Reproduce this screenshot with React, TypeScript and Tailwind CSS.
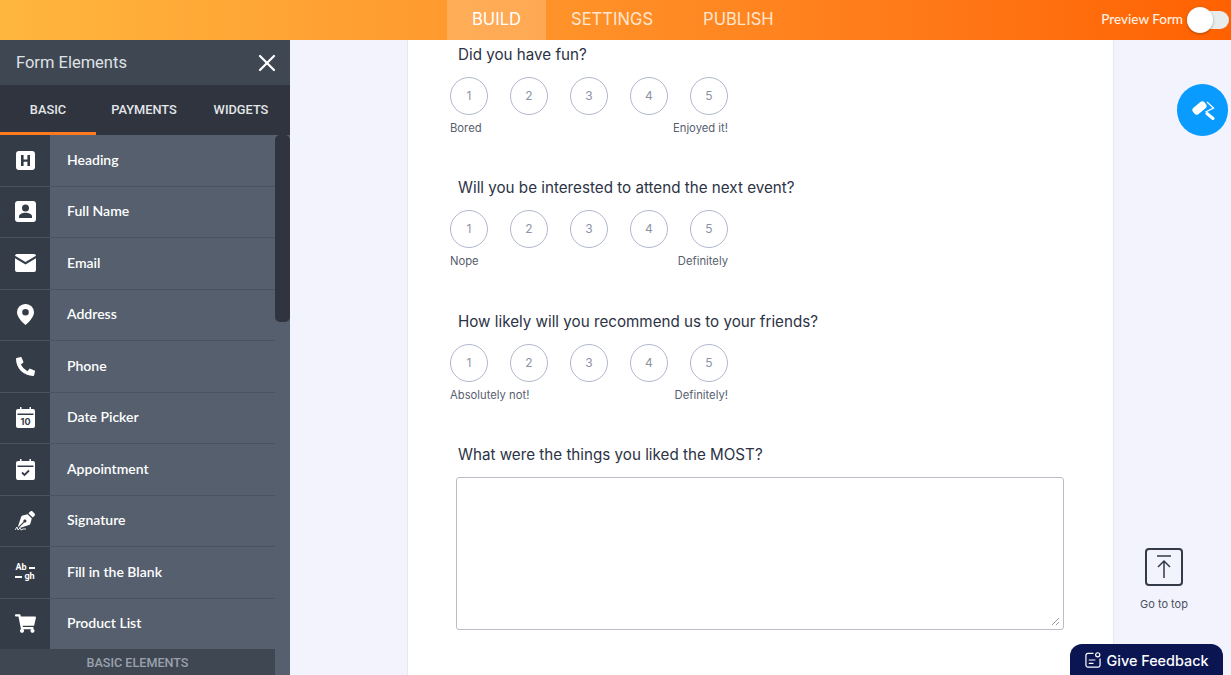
import { FaPenNib, FaShoppingCart, FaPhoneAlt } from "react-icons/fa";
import { X } from "lucide-react";
import type { ReactNode } from "react";

function HeadingIcon() {
  return (
    <svg width="19" height="19" viewBox="0 0 19 19">
      <path
        fill="#fff"
        fillRule="evenodd"
        d="M3 0h13a3 3 0 0 1 3 3v13a3 3 0 0 1-3 3H3a3 3 0 0 1-3-3V3a3 3 0 0 1 3-3zM5 4v11h2.6v-4.2h3.8V15H14V4h-2.6v4.4H7.600V4z"
      />
    </svg>
  );
}

function NameIcon() {
  return (
    <svg width="21" height="21" viewBox="0 0 21 21">
      <path
        fill="#fff"
        fillRule="evenodd"
        d="M3 0h15a3 3 0 0 1 3 3v15a3 3 0 0 1-3 3H3a3 3 0 0 1-3-3V3a3 3 0 0 1 3-3zM10.500 3.500a3.500 3.500 0 1 0 0 7 3.500 3.500 0 0 0 0-7zM4 17h13v-1.500c0-2.400-3.500-3.700-6.500-3.700S4 13.100 4 15.500z"
      />
    </svg>
  );
}

function MailIcon() {
  return (
    <svg width="21" height="18" viewBox="0 0 21 18">
      <path fill="#fff" d="M2 0h17a2 2 0 0 1 2 1.700L10.500 8 0 1.700A2 2 0 0 1 2 0z" />
      <path fill="#fff" d="M0 4.300l10.500 6.300L21 4.300V16a2 2 0 0 1-2 2H2a2 2 0 0 1-2-2z" />
    </svg>
  );
}

function PinIcon() {
  return (
    <svg width="17" height="21" viewBox="0 0 17 21">
      <path
        fill="#fff"
        fillRule="evenodd"
        d="M8.500 0A8.300 8.300 0 0 0 0 8.300c0 4.600 5 10 8.500 12.700 3.500-2.700 8.500-8.100 8.500-12.700A8.300 8.300 0 0 0 8.500 0zm0 5a3.300 3.300 0 1 1 0 6.600 3.300 3.300 0 0 1 0-6.600z"
      />
    </svg>
  );
}

function CalendarTenIcon() {
  return (
    <svg width="19" height="21" viewBox="0 0 19 21">
      <path
        fill="#fff"
        fillRule="evenodd"
        d="M4 0h1.500v2h8V0H15v2h2a2 2 0 0 1 2 2v15a2 2 0 0 1-2 2H2a2 2 0 0 1-2-2V4a2 2 0 0 1 2-2h2zM1.500 6.500V8h16V6.500z"
      />
      <text x="9.500" y="18" textAnchor="middle" fontSize="9" fontWeight="700" fill="#343c48" fontFamily="Inter, sans-serif">
        10
      </text>
    </svg>
  );
}

function CalendarCheckIcon() {
  return (
    <svg width="19" height="21" viewBox="0 0 19 21">
      <path
        fill="#fff"
        fillRule="evenodd"
        d="M4 0h1.500v2h8V0H15v2h2a2 2 0 0 1 2 2v15a2 2 0 0 1-2 2H2a2 2 0 0 1-2-2V4a2 2 0 0 1 2-2h2zM1.500 6.500V8h16V6.500z"
      />
      <path d="M6 13.500l2.500 2.500 4.500-4.500" fill="none" stroke="#343c48" strokeWidth="1.800" />
    </svg>
  );
}

function SignatureIcon() {
  return (
    <div className="relative h-[20px] w-[20px]">
      <FaPenNib className="absolute right-0 top-0 text-[17px] text-white" />
      <svg className="absolute bottom-0 left-0" width="11" height="5" viewBox="0 0 11 5">
        <path d="M0 4l2-3 1 3 2-2 1 2 2-1 3 0" fill="none" stroke="#fff" strokeWidth="0.900" />
      </svg>
    </div>
  );
}

function BlankIcon() {
  return (
    <div className="flex flex-col text-[9px] font-bold leading-[9px] text-white [font-family:Roboto,sans-serif]">
      <div className="flex items-center gap-[2px]">
        Ab<span className="h-[2px] w-[6px] bg-white" />
      </div>
      <div className="flex items-center gap-[2px]">
        <span className="h-[2px] w-[7px] bg-white" />gh
      </div>
    </div>
  );
}

const elements: { label: string; icon: ReactNode }[] = [
  { label: "Heading", icon: <HeadingIcon /> },
  { label: "Full Name", icon: <NameIcon /> },
  { label: "Email", icon: <MailIcon /> },
  { label: "Address", icon: <PinIcon /> },
  { label: "Phone", icon: <FaPhoneAlt className="text-[19px] text-white" /> },
  { label: "Date Picker", icon: <CalendarTenIcon /> },
  { label: "Appointment", icon: <CalendarCheckIcon /> },
  { label: "Signature", icon: <SignatureIcon /> },
  { label: "Fill in the Blank", icon: <BlankIcon /> },
  { label: "Product List", icon: <FaShoppingCart className="text-[21px] text-white" /> },
];

const questions = [
  { q: "Did you have fun?", low: "Bored", high: "Enjoyed it!" },
  { q: "Will you be interested to attend the next event?", low: "Nope", high: "Definitely" },
  { q: "How likely will you recommend us to your friends?", low: "Absolutely not!", high: "Definitely!" },
];

function Sidebar() {
  return (
    <aside className="flex h-full w-[290px] shrink-0 flex-col bg-[#555f6e]">
      <div className="flex h-[45px] shrink-0 items-center justify-between bg-[#3f4753] pl-4 pr-[9px]">
        <span className="pt-[2px] text-[16.5px] text-[#dfe2e6] [font-family:Roboto,sans-serif]">Form Elements</span>
        <X className="h-[28px] w-[28px] text-white" strokeWidth={1.9} />
      </div>
      <div className="flex h-[50px] shrink-0 bg-[#2f343e] text-[12.8px] font-medium text-[#e4e6ea] [font-family:Roboto,sans-serif]">
        <div className="flex w-[96px] items-center justify-center shadow-[inset_0_-3px_0_#ff7a1f]">BASIC</div>
        <div className="flex w-[96px] items-center justify-center">PAYMENTS</div>
        <div className="flex flex-1 items-center justify-center">WIDGETS</div>
      </div>
      <div className="flex min-h-0 flex-1">
        <div className="flex w-[275px] flex-col">
          <ul className="min-h-0 flex-1 overflow-hidden">
            {elements.map((el) => (
              <li key={el.label} className="flex h-[51.5px] border-b border-[#4a5361]">
                <div className="flex w-[50px] items-center justify-center bg-[#343c48]">{el.icon}</div>
                <div className="flex flex-1 items-center pb-[2px] pl-[17px] text-[14px] font-semibold text-white [font-family:Lato,sans-serif]">
                  {el.label}
                </div>
              </li>
            ))}
          </ul>
          <div className="flex h-[26px] shrink-0 items-center justify-center bg-[#3f4753] pt-[3px] text-[12.6px] font-medium text-[#9aa1ac] [font-family:Roboto,sans-serif]">
            BASIC ELEMENTS
          </div>
        </div>
        <div className="h-[187px] w-[15px] rounded-[5px] bg-[#2f343e]" />
      </div>
    </aside>
  );
}

function Question({ q, low, high }: { q: string; low: string; high: string }) {
  return (
    <div className="mb-[38.5px] h-[95px]">
      <h3 className="mb-[10px] ml-[50px] text-[15.2px] leading-[24px] text-[#2c3345]">{q}</h3>
      <div className="ml-[42px] w-[278px]">
        <div className="flex justify-between">
          {[1, 2, 3, 4, 5].map((n) => (
            <div
              key={n}
              className="flex h-[38px] w-[38px] items-center justify-center rounded-full border border-[#b1b8cd] text-[12px] text-[#8d93a5]"
            >
              {n}
            </div>
          ))}
        </div>
        <div className="mt-[5px] flex justify-between text-[11.25px] leading-[16px] text-[#57606f]">
          <span>{low}</span>
          <span>{high}</span>
        </div>
      </div>
    </div>
  );
}

export default function App() {
  return (
    <div className="relative flex h-[675px] w-[1231px] flex-col overflow-hidden bg-[#f3f3fe] [font-family:Inter,sans-serif]">
      <header className="flex h-[40px] shrink-0 items-stretch bg-gradient-to-r from-[#ffb63f] to-[#ff6100]">
        <nav className="ml-[447px] flex text-[16.6px] text-[#ffe6cf]">
          <a className="flex w-[99px] items-center justify-center bg-white/20 pb-[2px] text-white">BUILD</a>
          <a className="flex items-center px-[25px] pb-[2px]">SETTINGS</a>
          <a className="flex items-center px-[25px] pb-[2px]">PUBLISH</a>
        </nav>
        <div className="ml-auto flex items-center">
          <span className="mr-[4px] pb-[2px] text-[13.5px] font-medium text-[#fff1e2] [font-family:Lato,sans-serif]">Preview Form</span>
          <div className="relative mr-[2px] h-[18px] w-[42px] rounded-full bg-[#e8eceb]">
            <div className="absolute left-0 top-[-4px] h-[26px] w-[26px] rounded-full bg-white shadow-[0_1px_3px_rgba(0,0,0,0.3)]" />
          </div>
        </div>
      </header>
      <div className="flex min-h-0 flex-1">
        <Sidebar />
        <main className="flex-1">
          <div className="ml-[117px] h-full w-[707px] border-x border-[#e6e7f5] bg-white pt-[2.5px]">
            {questions.map((item) => (
              <Question key={item.q} {...item} />
            ))}
            <h3 className="mb-[10px] ml-[50px] text-[15.2px] leading-[24px] text-[#2c3345]">
              What were the things you liked the MOST?
            </h3>
            <div className="relative ml-[48px] h-[153px] w-[608px] rounded-[3px] border border-[#b8bdc9]">
              <svg className="absolute bottom-[3px] right-[3px]" width="9" height="9" viewBox="0 0 9 9">
                <path d="M1 8l7-7M5 8l3-3" stroke="#9a9a9a" strokeWidth="1" />
              </svg>
            </div>
          </div>
        </main>
      </div>

      <button className="absolute left-[1177px] top-[84px] flex h-[52px] w-[51px] items-center justify-center rounded-full bg-[#0a9bff]">
        <svg width="24" height="24" viewBox="0 0 24 24" fill="#fff">
          <rect x="1" y="6" width="15" height="8" rx="3" transform="rotate(-40 8.500 10)" />
          <path d="M16 4l6.500 6-8 4" fill="none" stroke="#fff" strokeWidth="1.300" />
          <path d="M16 15.500l6 5" stroke="#fff" strokeWidth="3" strokeLinecap="round" />
        </svg>
      </button>

      <div className="absolute left-[1134px] top-[548px] flex w-[60px] flex-col items-center">
        <div className="flex h-[38px] w-[38px] items-center justify-center rounded-[4px] border-2 border-[#343a47]">
          <svg width="20" height="28" viewBox="0 0 20 28" fill="none" stroke="#343a47" strokeWidth="1.500">
            <path d="M3 3h14M10 25V8M4 14l6-6 6 6" />
          </svg>
        </div>
        <span className="mt-[11px] text-[11px] leading-[14px] text-[#4a5160]">Go to top</span>
      </div>

      <button className="absolute left-[1070px] top-[644px] flex h-[34px] w-[153px] items-start justify-center gap-[6px] rounded-t-[12px] bg-[#0a1551] pt-[8px] text-[14.4px] font-medium leading-[18px] text-white">
        <svg width="16" height="16" viewBox="0 0 17 17" fill="none" stroke="#fff" strokeWidth="1.300">
          <path d="M9 1.500H3a2 2 0 0 0-2 2V14a2 2 0 0 0 2 2h11a2 2 0 0 0 2-2V7M4 8.500h7M4 12h5" />
          <circle cx="13.500" cy="3" r="2.200" />
        </svg>
        Give Feedback
      </button>
    </div>
  );
}
